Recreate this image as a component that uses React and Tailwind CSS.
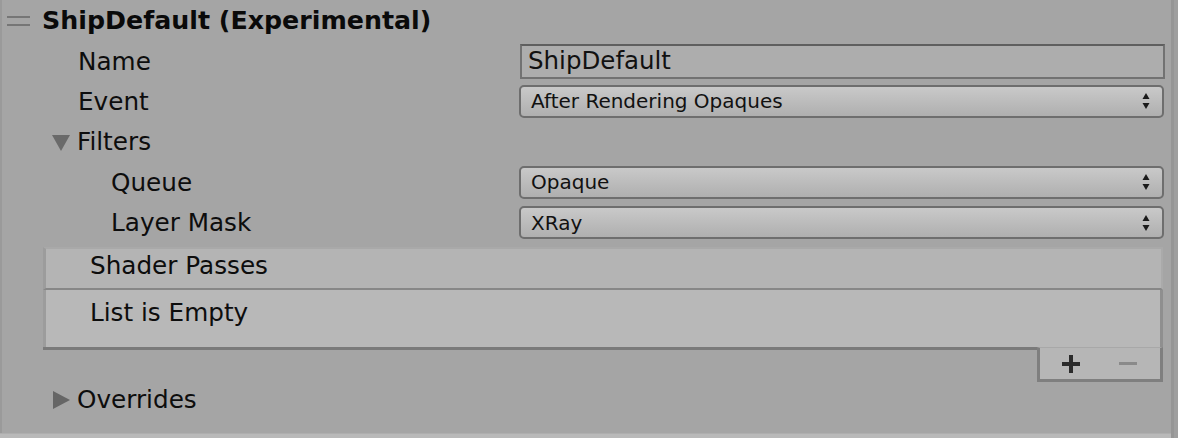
import React from "react";

function Arrows() {
  return (
    <svg width="8" height="16" viewBox="0 0 8 16" className="shrink-0">
      <polygon points="4,0 7.5,6 0.5,6" fill="#1a1a1a" />
      <polygon points="0.5,10 7.5,10 4,16" fill="#1a1a1a" />
    </svg>
  );
}

function Dropdown({ value }) {
  return (
    <div className="w-[645px] h-[33px] rounded-[5px] border-2 border-[#6e6e6e] bg-gradient-to-b from-[#c9c9c9] to-[#afafaf] flex items-center pl-[10px] pr-[12px]">
      <span className="flex-1 text-[20px] leading-none text-[#111]">{value}</span>
      <Arrows />
    </div>
  );
}

function Row({ label, indent, children, h }) {
  return (
    <div className={`flex items-center ${h}`}>
      <div className={`flex-1 mt-[2px] text-[24.7px] leading-none text-[#0d0d0d] ${indent}`}>{label}</div>
      <div className="mr-[6px]">{children}</div>
    </div>
  );
}

export default function App() {
  return (
    <div className="w-[1178px] h-[438px] bg-[#a5a5a5] flex font-['DejaVu_Sans',sans-serif] overflow-hidden">
      <div className="w-[1171px] h-full flex flex-col">
        <div className="flex-1 flex flex-col border-l-2 border-[#9a9a9a]">
          {/* header */}
          <div className="h-[41px] flex items-center">
            <div className="ml-[5px] w-[23px] flex flex-col gap-[6px]">
              <div className="h-[2px] bg-[#767676]" />
              <div className="h-[2px] bg-[#767676]" />
            </div>
            <div className="ml-[12px] text-[25.3px] font-bold leading-none text-[#0a0a0a]">
              ShipDefault (Experimental)
            </div>
          </div>
          {/* Name */}
          <Row label="Name" indent="pl-[76px]" h="h-[40px]">
            <div className="w-[645px] h-[35px] border-2 border-[#727272] border-t-[#5f5f5f] bg-[#adadad] flex items-center pl-[6px]">
              <span className="text-[24.5px] leading-none text-[#111]">ShipDefault</span>
            </div>
          </Row>
          <Row label="Event" indent="pl-[76px]" h="h-[40px]">
            <div className="mr-[1px]"><Dropdown value="After Rendering Opaques" /></div>
          </Row>
          {/* Filters */}
          <div className="h-[41px] flex items-center pl-[50px]">
            <svg width="18" height="17" viewBox="0 0 18 17" className="mt-[1px]">
              <polygon points="0,1 18,1 9,17" fill="#6a6a6a" />
            </svg>
            <span className="ml-[7px] mt-[2px] text-[24.7px] leading-none text-[#0d0d0d]">Filters</span>
          </div>
          <Row label="Queue" indent="pl-[109px]" h="h-[40px]">
            <div className="mr-[1px]"><Dropdown value="Opaque" /></div>
          </Row>
          <Row label="Layer Mask" indent="pl-[109px]" h="h-[41px]">
            <div className="mr-[1px]"><Dropdown value="XRay" /></div>
          </Row>
          {/* list */}
          <div className="ml-[41px] mt-[4px] w-[1120px] flex flex-col">
            <div className="h-[43px] bg-[#b4b4b4] border-l-[3px] border-t-[2px] border-r-[2px] border-[#9c9c9c] border-t-[#a9a9a9] border-r-[#aaaaaa] border-b-2 border-b-[#878787] flex items-start pt-[5px] pl-[44px]">
              <span className="text-[24.7px] leading-none text-[#0d0d0d]">Shader Passes</span>
            </div>
            <div className="h-[57px] bg-[#b8b8b8] border-l-[3px] border-r-[3px] border-[#9c9c9c] border-r-[#8f8f8f] flex items-start pt-[11px] pl-[44px]">
              <span className="text-[24.7px] leading-none text-[#0d0d0d]">List is Empty</span>
            </div>
            <div className="flex">
              <div className="flex-1 h-[3px] bg-[#7a7a7a]" />
              <div className="w-[126px] h-[35px] bg-[#b6b6b6] border-l-[3px] border-r-[3px] border-b-[3px] border-[#7f7f7f] border-t border-t-[#a8a8a8] flex items-center justify-between pl-[22px] pr-[23px] -ml-[2px]">
                <svg width="18" height="18" viewBox="0 0 18 18">
                  <rect x="7" y="0" width="4" height="18" fill="#2b2b2b" />
                  <rect x="0" y="7" width="18" height="4" fill="#2b2b2b" />
                </svg>
                <svg width="18" height="4" viewBox="0 0 18 4">
                  <rect x="0" y="0" width="18" height="3" fill="#8a8a8a" />
                </svg>
              </div>
            </div>
          </div>
          {/* Overrides */}
          <div className="h-[36px] flex items-center pl-[50px]">
            <svg width="18" height="18" viewBox="0 0 18 18">
              <polygon points="1,0 18,9 1,18" fill="#666666" />
            </svg>
            <span className="ml-[7px] text-[24.7px] leading-none text-[#0d0d0d]">Overrides</span>
          </div>
        </div>
        <div className="h-[5px] bg-[#b9b9b9] border-t border-[#aeaeae]" />
      </div>
      <div className="w-[3px] h-full bg-[#969696]" />
      <div className="w-[4px] h-full bg-[#9f9f9f]" />
    </div>
  );
}
